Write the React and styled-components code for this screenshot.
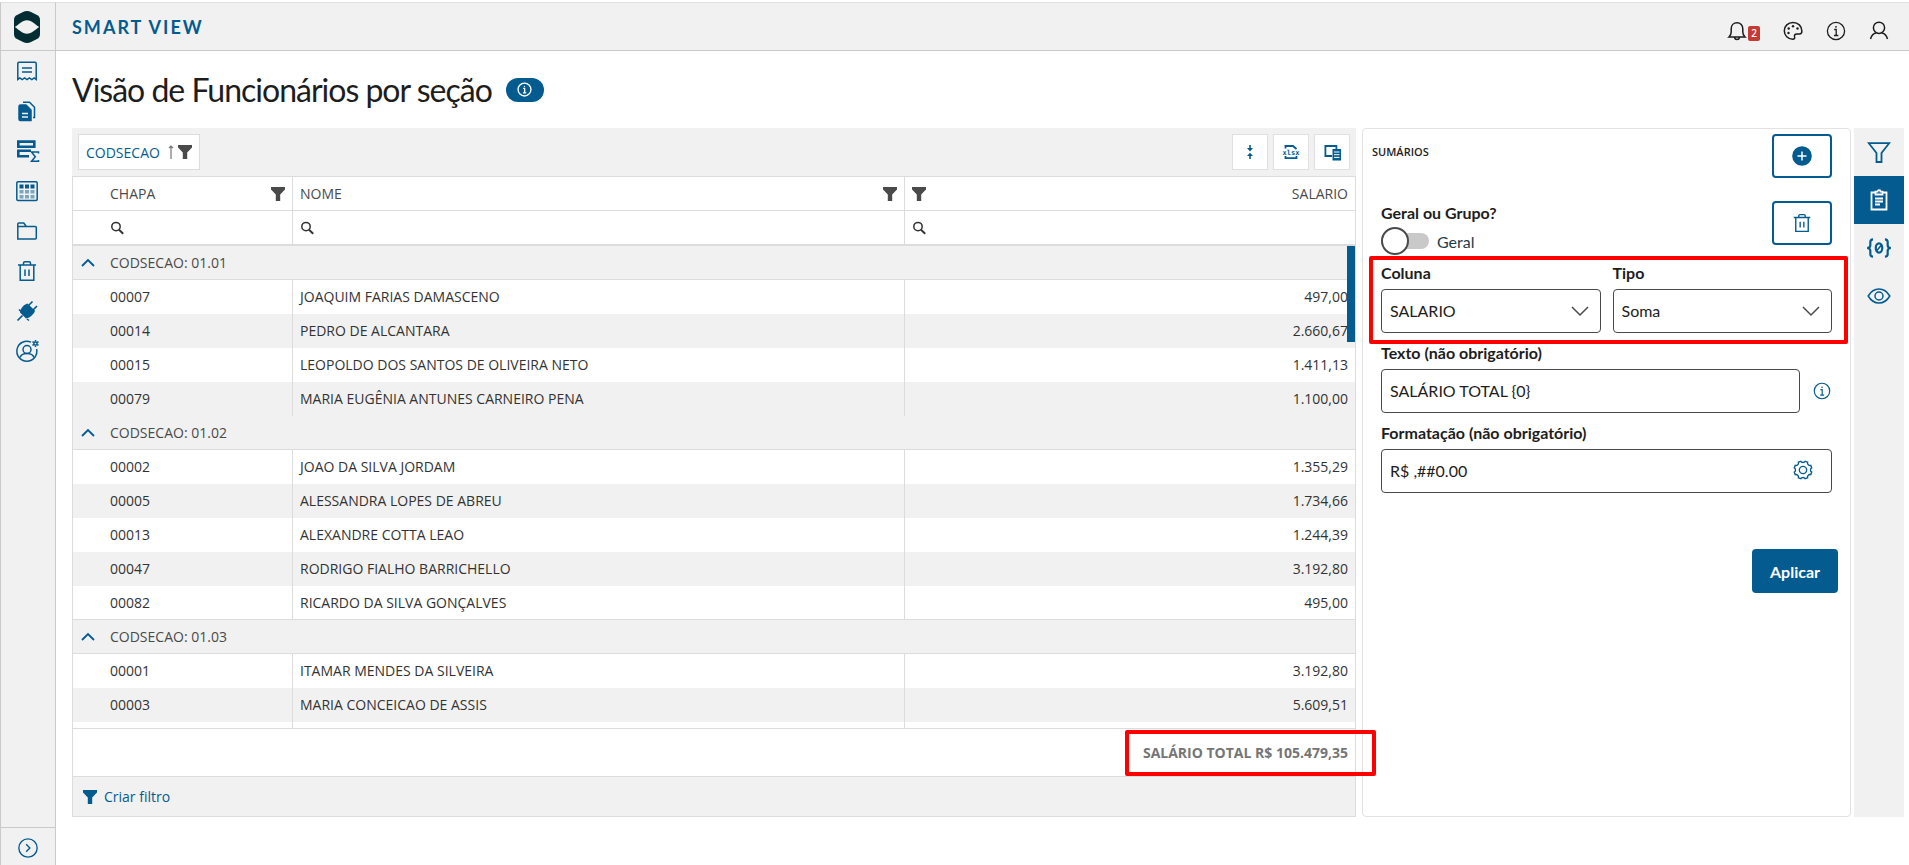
import React from 'react';
import styled, { createGlobalStyle, css } from 'styled-components';

const blue = '#045b8f';
const gray = '#f1f1f1';
const line = '#dcdcdc';

const GlobalStyle = createGlobalStyle`
  * { box-sizing: border-box; }
  body { margin: 0; background: #fff; color: #1d1d1d; font-family: 'Open Sans', 'Noto Sans', sans-serif; font-size: 14px; }
  button, input, select { font: inherit; color: inherit; margin: 0; }
  svg { display: block; }
`;

const Svg = ({ size = 24, box = '0 0 24 24', children, ...rest }) => (
  <svg width={size} height={size} viewBox={box} fill="none" stroke="currentColor" strokeWidth="1.5" aria-hidden="true" {...rest}>
    {children}
  </svg>
);

const FunnelSolid = ({ size = 14 }) => (
  <Svg size={size} box="0 0 14 14" stroke="none">
    <path fill="currentColor" d="M0 0h14v2.4L9.2 7.6V14H4.8V7.6L0 2.4z" />
  </Svg>
);

const SearchIcon = () => (
  <Svg size={14} box="0 0 14 14" strokeWidth="1.5">
    <circle cx="6" cy="5.6" r="4.2" />
    <path strokeWidth="1.9" d="M9 8.700l4.200 4" />
  </Svg>
);

const ChevronUp = () => (
  <Svg size={14} box="0 0 14 14" strokeWidth="1.8"><path d="M1 10l6-6 6 6" /></Svg>
);

const TrashIcon = ({ size = 24 }) => (
  <Svg size={size}>
    <path d="M3 6h18M8.500 6V4.200Q8.500 2.800 10 2.800h4q1.500 0 1.500 1.400V6M5.200 6v15.200h13.600V6M10 10.500v6.500M14 10.500v6.500" />
  </Svg>
);

const InfoIcon = ({ size = 20, width = 1.3 }) => (
  <Svg size={size} box="0 0 20 20" strokeWidth={width}>
    <circle cx="10" cy="10" r="8.600" />
    <path d="M8.200 8.500h2v6M8 14.500h4.300" />
    <circle cx="10" cy="5.800" r="0.900" fill="currentColor" stroke="none" />
  </Svg>
);

const LogoIcon = () => (
  <svg width="26" height="32" viewBox="0 0 26 32" aria-hidden="true">
    <path fill="#042d33" d="M13 0c1.500 0 2.800.4 4 1l6 3c2 1 3 2.600 3 5v14c0 2.400-1 4-3 5l-6 3c-2.500 1.300-5.500 1.300-8 0l-6-3c-2-1-3-2.600-3-5V9c0-2.400 1-4 3-5l6-3c1.200-.6 2.500-1 4-1z" />
    <path fill="#f1f1f1" d="M.8 16C5 13.400 8 9.200 13 9.200S21 13.400 25.200 16C21 18.600 18 22.800 13 22.800S5 18.600.8 16z" />
  </svg>
);

const menu = [
  ['Relatórios', <Svg size={24} key="i"><path d="M2.800 20.500V4.500q0-1.200 1.200-1.200h16q1.200 0 1.200 1.200v16l-2-1.600-2.400 1.600-2.400-1.600-2.400 1.600-2.400-1.600-2.400 1.600-2.400-1.600zM7 9h10M7 13h10" /></Svg>],
  ['Documentos', <Svg size={24} key="i"><path fill="currentColor" d="M4 7.500Q4 6 5.500 6H11l5 5v10.500H5.500Q4 21.500 4 20z" /><path d="M8 3.200h6.500l5 5V18.500h-1.500" /><path stroke="#f1f1f1" d="M7 14.500h6M7 18h6" /></Svg>],
  ['Totalizadores', <Svg size={26} box="0 0 26 26" key="i"><path strokeWidth="2.600" d="M4.300 3.600h16v5.200h-16zM17 12.800H4.300v5.500H15" /><path strokeWidth="1.500" d="M24.500 15.500v-1.400h-7l3.800 4.600-3.800 4.600h7V22" /></Svg>],
  ['Tabelas', <Svg size={24} key="i"><rect x="1.800" y="2.800" width="20.400" height="18.600" rx="1.200" /><path fill="currentColor" stroke="none" d="M4.500 5.500h4v4h-4zM10 5.500h4v4h-4zM15.500 5.500h4v4h-4z" /><path fill="currentColor" opacity=".5" stroke="none" d="M4.500 11h4v3.500h-4zM10 11h4v3.500h-4zM15.500 11h4v3.500h-4zM4.500 16h4v3.500h-4zM10 16h4v3.500h-4zM15.500 16h4v3.500h-4z" /></Svg>],
  ['Pastas', <Svg size={24} key="i"><path d="M2.800 20V5q0-1 1-1h5l2.500 3.500h9q1 0 1 1V19q0 1-1 1zM3 7.500h9" /></Svg>],
  ['Lixeira', <TrashIcon key="i" />],
  ['Conexões', <Svg size={24} key="i"><path fill="currentColor" stroke="none" d="M12.500 4.500l7.500 7.300c-1 3-4.500 7.200-9 7.700L5 13.500c.5-4.500 4-8 7.500-9z" /><path strokeWidth="1.700" d="M2.500 21.500l5-5M13.500 6.500l4-4M18 11l4-4" /><path d="M4 10.500l2 2M12 20l2 1.500" /></Svg>],
  ['Usuários', <Svg size={24} key="i"><path d="M16 3.100A10 10 0 1 0 21.600 10" /><circle cx="12" cy="10.500" r="4" /><path d="M5 18.500c1-3 3.500-4 7-4s6 1 7 4" /><circle cx="20.500" cy="4.500" r="1.600" /><path d="M20.500 1v1.500M20.500 6.500V8M17.500 2.700l1.300.8M22.200 5.500l1.300.8M17.500 6.300l1.300-.8M22.200 3.500l1.300-.8" /></Svg>],
];

const grupos = [
  ['01.01', [
    ['00007', 'JOAQUIM FARIAS DAMASCENO', '497,00'],
    ['00014', 'PEDRO DE ALCANTARA', '2.660,67'],
    ['00015', 'LEOPOLDO DOS SANTOS DE OLIVEIRA NETO', '1.411,13'],
    ['00079', 'MARIA EUGÊNIA ANTUNES CARNEIRO PENA', '1.100,00'],
  ]],
  ['01.02', [
    ['00002', 'JOAO DA SILVA JORDAM', '1.355,29'],
    ['00005', 'ALESSANDRA LOPES DE ABREU', '1.734,66'],
    ['00013', 'ALEXANDRE COTTA LEAO', '1.244,39'],
    ['00047', 'RODRIGO FIALHO BARRICHELLO', '3.192,80'],
    ['00082', 'RICARDO DA SILVA GONÇALVES', '495,00'],
  ]],
  ['01.03', [
    ['00001', 'ITAMAR MENDES DA SILVEIRA', '3.192,80'],
    ['00003', 'MARIA CONCEICAO DE ASSIS', '5.609,51'],
    ['', '', ''],
  ]],
];

export default function App() {
  const [geral, setGeral] = React.useState(false);

  return (
    <Shell>
      <GlobalStyle />
      <Sidebar>
        <LogoBox><LogoIcon /></LogoBox>
        <SideMenu>
          {menu.map(([name, icon]) => (
            <IconBTN key={name} aria-label={name}>{icon}</IconBTN>
          ))}
        </SideMenu>
        <SideFooter>
          <IconBTN aria-label="Expandir menu">
            <Svg size={22}><circle cx="12" cy="12" r="10" /><path d="M10 8l4 4-4 4" /></Svg>
          </IconBTN>
        </SideFooter>
      </Sidebar>

      <Page>
        <TopBar>
          <Brand>SMART VIEW</Brand>
          <TopActions>
            <TopBTN aria-label="Notificações">
              <Svg size={20} box="0 0 20 20"><path d="M2 16h16c-1.600-1.500-2.200-2.600-2.200-5V7.800C15.800 4.300 13.500 1.800 10 1.800S4.200 4.300 4.200 7.800V11c0 2.400-.6 3.500-2.200 5zM7.500 16.500c.3 1.500 1.200 2 2.500 2s2.200-.5 2.500-2" /></Svg>
              <Badge>2</Badge>
            </TopBTN>
            <TopBTN aria-label="Tema">
              <Svg size={20} box="0 0 20 20">
                <path d="M10 1.500c-5 0-8.700 3.700-8.700 8.200 0 4.700 3.700 8.500 8.500 8.500 1.600 0 2.200-1 1.800-2.300-.5-1.900.3-3 2.200-3h2.700c1.600 0 2.400-1 2.400-2.600C18.900 5 15 1.500 10 1.500z" />
                <g fill="currentColor" stroke="none"><circle cx="5.500" cy="12" r="1.200" /><circle cx="5.700" cy="7.500" r="1.200" /><circle cx="10" cy="5.200" r="1.200" /><circle cx="14.500" cy="7.500" r="1.200" /></g>
              </Svg>
            </TopBTN>
            <TopBTN aria-label="Informações"><InfoIcon /></TopBTN>
            <TopBTN aria-label="Usuário">
              <Svg size={20} box="0 0 20 20"><circle cx="10" cy="6.800" r="5.600" /><path d="M1.500 18c1-3.600 3.500-5.600 5.500-6M18.500 18c-1-3.600-3.500-5.600-5.500-6" /></Svg>
            </TopBTN>
          </TopActions>
        </TopBar>

        <TitleRow>
          <Title>Visão de Funcionários por seção</Title>
          <InfoPill aria-label="Sobre a visão"><InfoIcon size={15} width={1.8} /></InfoPill>
        </TitleRow>

        <Workspace>
          <GridBox>
            <GridToolbar>
              <GroupChip>
                CODSECAO
                <ChipIcons>
                  <Svg width="6" height="14" viewBox="0 0 6 14" strokeWidth="1.2" stroke="#777"><path d="M3 14V1M1 3l2-2 2 2" /></Svg>
                  <FunnelSolid />
                </ChipIcons>
              </GroupChip>
              <ToolGroup>
                <ToolBTN aria-label="Recolher grupos">
                  <Svg size={16} box="0 0 16 16" strokeWidth="1.6"><path d="M8 1v5M8 15v-5" /><path fill="currentColor" stroke="none" d="M5 4h6L8 7.500zM5 12h6L8 8.800z" /></Svg>
                </ToolBTN>
                <ToolBTN aria-label="Exportar xlsx">
                  <Svg size={16} box="0 0 16 16" strokeWidth="1.8">
                    <path d="M2.500 4.500V2H10l3.500 3M2.500 12v2.200h11V12" />
                    <XlsxText x="8" y="10.500" textAnchor="middle">xlsx</XlsxText>
                  </Svg>
                </ToolBTN>
                <ToolBTN aria-label="Selecionar colunas">
                  <Svg size={17} box="0 0 17 17" strokeWidth="1.800"><path d="M8 12H1.400V2h11v3" /><path fill="currentColor" stroke="none" d="M8.500 5H17v11.500H8.500z" /><path stroke="#fff" strokeWidth="1" d="M10 8h5.500M10 10.700h5.500M10 13.400h5.500" /></Svg>
                </ToolBTN>
              </ToolGroup>
            </GridToolbar>

            <Scroller>
              <Table>
                <colgroup><col className="chapa" /><col className="nome" /><col className="salario" /></colgroup>
                <thead>
                  <tr>
                    <Th $indent><HeadCell>CHAPA <FunnelSolid /></HeadCell></Th>
                    <Th><HeadCell>NOME <FunnelSolid /></HeadCell></Th>
                    <Th><HeadCell><FunnelSolid /> SALARIO</HeadCell></Th>
                  </tr>
                  <tr>
                    <FilterCell $indent><SearchIcon /></FilterCell>
                    <FilterCell><SearchIcon /></FilterCell>
                    <FilterCell><SearchIcon /></FilterCell>
                  </tr>
                </thead>
                {grupos.map(([cod, rows]) => (
                  <tbody key={cod}>
                    <tr>
                      <GroupCell colSpan={3}><GroupBTN><ChevronUp /> <span>CODSECAO: {cod}</span></GroupBTN></GroupCell>
                    </tr>
                    {rows.map(([chapa, nome, salario]) => (
                      <Row key={chapa}>
                        <Td $indent>{chapa}</Td>
                        <Td>{nome}</Td>
                        <Td $right>{salario}</Td>
                      </Row>
                    ))}
                  </tbody>
                ))}
              </Table>
            </Scroller>
            <Thumb />

            <TotalBar>
              <Total>SALÁRIO TOTAL R$ 105.479,35<Mark $total /></Total>
            </TotalBar>
            <FilterBar>
              <FilterBTN><FunnelSolid /> Criar filtro</FilterBTN>
            </FilterBar>
          </GridBox>

          <Panel>
            <PanelHead>
              <PanelTitle>SUMÁRIOS</PanelTitle>
              <OutlineBTN aria-label="Adicionar">
                <Svg size={20} box="0 0 20 20"><circle cx="10" cy="10" r="9.800" fill="currentColor" stroke="none" /><path stroke="#fff" d="M10 5.500v9M5.500 10h9" /></Svg>
              </OutlineBTN>
            </PanelHead>
            <Form>
              <FormTop>
                <SwitchField>
                  <Label as="span">Geral ou Grupo?</Label>
                  <SwitchLabel>
                    <Switch type="checkbox" role="switch" checked={geral} onChange={() => setGeral(!geral)} />
                    Geral
                  </SwitchLabel>
                </SwitchField>
                <OutlineBTN aria-label="Excluir"><TrashIcon size={22} /></OutlineBTN>
              </FormTop>
              <Columns>
                <Field>
                  <Label htmlFor="coluna">Coluna</Label>
                  <Control>
                    <Select id="coluna"><option>SALARIO</option></Select>
                    <Adorn><Svg width="18" height="18" viewBox="0 0 18 18"><path d="M1 5l8 8 8-8" /></Svg></Adorn>
                  </Control>
                </Field>
                <Field>
                  <Label htmlFor="tipo">Tipo</Label>
                  <Control>
                    <Select id="tipo"><option>Soma</option></Select>
                    <Adorn><Svg width="18" height="18" viewBox="0 0 18 18"><path d="M1 5l8 8 8-8" /></Svg></Adorn>
                  </Control>
                </Field>
                <Mark />
              </Columns>
              <Field>
                <Label htmlFor="texto">Texto (não obrigatório)</Label>
                <InputRow>
                  <Input id="texto" defaultValue="SALÁRIO TOTAL {0}" />
                  <HintBTN aria-label="Ajuda"><InfoIcon size={18} /></HintBTN>
                </InputRow>
              </Field>
              <Field>
                <Label htmlFor="formato">Formatação (não obrigatório)</Label>
                <Control>
                  <Input id="formato" defaultValue="R$ ,##0.00" />
                  <GearBTN aria-label="Configurar formato">
                    <Svg size={22}>
                      <path d="M9.600 2.500c.8 1.800 4 1.800 4.800 0l2.600 1c-.7 2 1.500 4.200 3.500 3.500l1 2.600c-1.800.8-1.800 4 0 4.800l-1 2.600c-2-.7-4.200 1.500-3.500 3.500l-2.600 1c-.8-1.800-4-1.800-4.800 0l-2.600-1c.7-2-1.500-4.200-3.500-3.500l-1-2.600c1.800-.8 1.800-4 0-4.800l1-2.600c2 .7 4.200-1.500 3.500-3.500z" />
                      <circle cx="12" cy="12" r="4" />
                    </Svg>
                  </GearBTN>
                </Control>
              </Field>
            </Form>
            <ApplyBTN>Aplicar</ApplyBTN>
          </Panel>

          <Tabs>
            <TabBTN aria-label="Filtros"><Svg size={24}><path strokeWidth="1.800" d="M1.800 3.200h20.400L14.500 13v9h-5v-9z" /></Svg></TabBTN>
            <TabBTN aria-label="Sumários" $active>
              <Svg size={24} strokeWidth="1.800"><path d="M8 4.500H4.500v17h15v-17H16" /><path d="M8.500 6.500V3.700h2c0-2 3-2 3 0h2v2.800zM8 10.500h8M8 13.500h8M8 16.500h5" /></Svg>
            </TabBTN>
            <TabBTN aria-label="Parâmetros">
              <Svg size={26} strokeWidth="2"><path d="M6.500 4Q4 4 4 6.500v3Q4 12 1 12q3 0 3 2.500v3Q4 20 6.500 20M17.500 4Q20 4 20 6.500v3q0 2.500 3 2.500-3 0-3 2.500v3q0 2.500-2.500 2.500" /><ellipse cx="12" cy="12" rx="3" ry="4.300" /><path strokeWidth="1.400" d="M10 14.500l4-5" /></Svg>
            </TabBTN>
            <TabBTN aria-label="Visualizar">
              <Svg size={24}><path d="M1.200 12C4 7.200 7.500 5 12 5s8 2.200 10.800 7C20 16.800 16.500 19 12 19s-8-2.200-10.800-7z" /><circle cx="12" cy="12" r="4" /></Svg>
            </TabBTN>
          </Tabs>
        </Workspace>
      </Page>
    </Shell>
  );
}

const Shell = styled.div`
  display: flex; height: 100vh; min-height: 640px; padding-top: 2px;
`;

const Sidebar = styled.nav`
  display: flex; flex-direction: column; flex: none; width: 56px; background: ${gray};
  border: 1px solid #c9c9c9; border-bottom: 0; border-top-color: #e0e0e0;
`;

const LogoBox = styled.div`
  display: flex; align-items: center; justify-content: center; flex: none; height: 48px; padding: 0 2px 0 0; border-bottom: 1px solid #c9c9c9;
`;

const SideMenu = styled.div`
  display: flex; flex-direction: column; flex: 1; padding-right: 2px;
`;

const BareBTN = styled.button`
  display: flex; align-items: center; justify-content: center; padding: 0; border: 0; background: none; cursor: pointer;
`;

const IconBTN = styled(BareBTN)`
  width: 100%; height: 40px; color: ${blue};
`;

const SideFooter = styled.div`
  border-top: 1px solid #c9c9c9; height: 38px;
`;

const Page = styled.main`
  display: flex; flex-direction: column; flex: 1; min-width: 0;
`;

const TopBar = styled.header`
  display: flex; align-items: center; justify-content: space-between; flex: none; height: 49px; padding: 0 20px 0 16px;
  background: ${gray}; border-top: 1px solid #e0e0e0; border-bottom: 1px solid #c9c9c9;
`;

const Brand = styled.div`
  color: ${blue}; font: 700 18px/24px 'Lato', sans-serif; letter-spacing: 2px;
`;

const TopActions = styled.div`
  display: flex; align-items: center; gap: 23px; padding-top: 8px;
`;

const TopBTN = styled(BareBTN)`
  min-width: 20px; height: 20px; color: #1d1d1d;
`;

const Badge = styled.span`
  width: 12px; height: 15px; margin: 6px 0 0 1px; border-radius: 2px; background: #c43b35; color: #fff; font-size: 10px; font-weight: 600; line-height: 15px;
`;

const TitleRow = styled.div`
  display: flex; align-items: center; gap: 14px; flex: none; height: 77px; padding: 0 16px;
`;

const Title = styled.h1`
  margin: 0; font: 400 32px/40px 'Lato', sans-serif; letter-spacing: -1px;
`;

const InfoPill = styled(BareBTN)`
  width: 38px; height: 24px; border-radius: 12px; background: ${blue}; color: #fff;
`;

const Workspace = styled.div`
  display: flex; flex: 1; min-height: 0; padding: 0 5px 48px 16px;
`;

const GridBox = styled.section`
  position: relative; display: flex; flex-direction: column; flex: 1; min-width: 0; margin-right: 6px;
`;

const GridToolbar = styled.div`
  display: flex; align-items: center; justify-content: space-between; flex: none; height: 48px; padding: 0 6px; background: ${gray};
`;

const GroupChip = styled.button`
  display: flex; align-items: center; gap: 8px; height: 36px; padding: 0 7px; border: 1px solid ${line}; background: #fff; color: ${blue}; font-size: 14px;
`;

const ChipIcons = styled.span`
  display: flex; align-items: center; gap: 4px; color: #4a4a4a;
`;

const ToolGroup = styled.div`
  display: flex; gap: 5px;
`;

const ToolBTN = styled(BareBTN)`
  width: 36px; height: 36px; border: 1px solid #e0e0e0; background: #fff; color: ${blue};
  svg { overflow: visible; }
`;

const XlsxText = styled.text`
  fill: currentColor; stroke: none; font: 700 7px 'DejaVu Sans Mono', monospace;
`;

const Scroller = styled.div`
  flex: 1; min-height: 0; overflow: auto; scrollbar-width: none; border: 1px solid ${line}; border-bottom: 0;
`;

const Table = styled.table`
  width: 100%; table-layout: fixed; border-collapse: separate; border-spacing: 0; color: #333;
  .chapa { width: 220px; }
  .salario { width: 450px; }
  thead { position: sticky; top: 0; z-index: 1; background: #fff; }
`;

const cell = css`
  height: 34px; padding: 0 7px; border-right: 1px solid ${line}; text-align: left; line-height: 20px; white-space: nowrap;
  ${(p) => p.$indent && 'padding-left: 37px;'}
  ${(p) => p.$right && 'text-align: right;'}
  &:last-child { border-right: 0; }
`;

const Th = styled.th`
  ${cell}
  border-bottom: 1px solid ${line}; color: #4a4a4a; font-weight: 500;
`;

const HeadCell = styled.div`
  display: flex; align-items: center; justify-content: space-between;
`;

const FilterCell = styled.td`
  ${cell}
  height: 35px; border-bottom: 2px solid ${line};
`;

const Td = styled.td`
  ${cell}
`;

const Row = styled.tr`
  &:nth-child(odd) { background: ${gray}; }
  &:nth-child(even):last-child ${Td} { border-bottom: 1px solid ${line}; }
`;

const GroupCell = styled.td`
  height: 34px; padding: 0; background: ${gray}; border-bottom: 1px solid ${line};
`;

const GroupBTN = styled(BareBTN)`
  gap: 15px; padding-left: 8px; color: ${blue}; font-weight: 500;
  span { color: #4a4a4a; }
`;

const Thumb = styled.div`
  position: absolute; top: 118px; right: 1px; z-index: 2; width: 8px; height: 96px; background: ${blue};
`;

const TotalBar = styled.div`
  display: flex; align-items: center; justify-content: flex-end; flex: none; height: 49px; padding: 0 7px; border: 1px solid ${line};
`;

const Total = styled.div`
  position: relative; color: #757575; font-weight: 700; line-height: 20px;
`;

/* red highlight drawn over the fields */
const Mark = styled.div`
  position: absolute; inset: ${(p) => (p.$total ? '-13px -28px -13px -18px' : '-9px -16px -11px -12px')};
  border: 4px solid #f00; border-radius: 2px; pointer-events: none; z-index: 3;
`;

const FilterBar = styled.div`
  display: flex; align-items: center; flex: none; height: 40px; padding: 0 10px; background: ${gray}; border: 1px solid ${line}; border-top: 0;
`;

const FilterBTN = styled(BareBTN)`
  gap: 7px; color: ${blue};
`;

const Panel = styled.aside`
  display: flex; flex-direction: column; flex: none; width: 489px; margin-right: 3px; padding: 5px 12px 0 9px;
  border: 1px solid #e2e2e2; border-radius: 4px; font-family: 'Lato', sans-serif; font-size: 16px;
`;

const PanelHead = styled.div`
  display: flex; justify-content: space-between; padding-right: 6px;
`;

const PanelTitle = styled.h2`
  margin: 10px 0 0; font: 600 11px/16px 'Open Sans', sans-serif;
`;

const OutlineBTN = styled(BareBTN)`
  width: 60px; height: 44px; border: 2px solid ${blue}; border-radius: 4px; background: #fff; color: ${blue};
`;

const Form = styled.div`
  display: flex; flex-direction: column; gap: 12px; padding: 23px 6px 0 9px;
`;

const FormTop = styled.div`
  display: flex; justify-content: space-between; height: 52px;
`;

const SwitchField = styled.div`
  padding-top: 4px;
`;

const Label = styled.label`
  display: block; height: 24px; font-weight: 700; line-height: 16px;
`;

const SwitchLabel = styled.label`
  display: flex; align-items: center; gap: 8px; height: 24px; color: #1f3a4d;
`;

const Switch = styled.input`
  appearance: none; display: flex; align-items: center; width: 48px; height: 16px; border-radius: 8px; background: #c9c9c9; cursor: pointer;
  &::before { content: ''; width: 24px; height: 24px; border: 2px solid #4a4a4a; border-radius: 50%; background: #fff; }
  &:checked::before { margin-left: 24px; }
`;

const Columns = styled.div`
  position: relative; display: grid; grid-template-columns: 1fr 1fr; gap: 12px;
`;

const Field = styled.div`
  min-width: 0;
`;

const Control = styled.div`
  position: relative;
`;

const box = css`
  width: 100%; height: 44px; padding: 0 8px 2px; border: 1px solid #4a4a4a; border-radius: 4px; background: #fff; color: #1d1d1d;
`;

const Select = styled.select`
  ${box}
  appearance: none;
`;

const Input = styled.input`
  ${box}
`;

const Adorn = styled.span`
  position: absolute; right: 12px; top: 13px; color: #4a4a4a; pointer-events: none;
`;

const InputRow = styled.div`
  display: flex; align-items: center; gap: 12px;
`;

const HintBTN = styled(BareBTN)`
  flex: none; width: 20px; color: ${blue};
`;

const GearBTN = styled(BareBTN)`
  position: absolute; right: 18px; top: 10px; color: ${blue};
`;

const ApplyBTN = styled.button`
  align-self: flex-end; width: 86px; height: 44px; margin-top: 56px; border: 0; border-radius: 4px; background: ${blue}; color: #fff; font-weight: 700; cursor: pointer;
`;

const Tabs = styled.div`
  display: flex; flex-direction: column; flex: none; width: 50px; background: ${gray};
`;

const TabBTN = styled(BareBTN)`
  height: 48px; background: ${(p) => (p.$active ? blue : 'transparent')}; color: ${(p) => (p.$active ? '#fff' : blue)};
`;
